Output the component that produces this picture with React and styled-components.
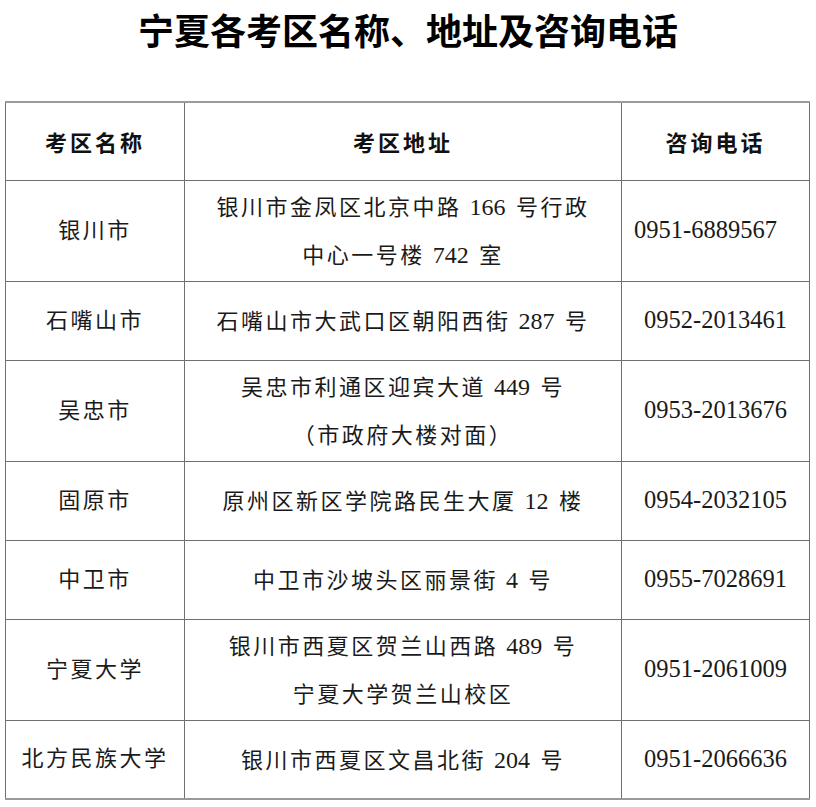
import React from 'react'
import styled, { createGlobalStyle } from 'styled-components'

const GlobalStyle = createGlobalStyle`
  html, body {
    margin: 0;
    padding: 0;
    background: #fff;
  }
  body {
    font-family: "Liberation Serif", "Noto Sans CJK SC", serif;
    color: #111;
  }
`

const Page = styled.div`
  width: 816px;
  min-height: 807px;
  box-sizing: border-box;
`

const Title = styled.h1`
  margin: 0;
  height: 101px;
  padding-top: 4px;
  box-sizing: border-box;
  line-height: 58px;
  text-align: center;
  font-size: 36px;
  font-weight: 700;
  color: #000;
`

const Table = styled.table`
  margin-left: 5px;
  width: 805px;
  border-collapse: collapse;
  table-layout: fixed;
  border-top: 2px solid #9a9a9a;
  border-bottom: 2px solid #9a9a9a;
`

const Row = styled.tr`
  height: ${props => props.$height}px;
`

const HeadCell = styled.th`
  border: 1px solid #707070;
  font-size: 22px;
  font-weight: 700;
  letter-spacing: 3px;
  text-align: center;
  vertical-align: middle;
  padding: 0;
  color: #111;
`

const Cell = styled.td`
  border: 1px solid #707070;
  font-size: 22px;
  letter-spacing: ${props => (props.$phone ? 0 : 2.5)}px;
  line-height: ${props => (props.$address ? 48.5 : 50)}px;
  text-align: center;
  vertical-align: middle;
  padding: ${props => (props.$address ? '3px 0 0' : '0')};
  color: #1a1a1a;
`

const Num = styled.span`
  font-size: 24px;
  line-height: 1;
  letter-spacing: 0;
  margin-right: 2.5px;
`

const Phone = styled.span`
  font-size: 24.5px;
  position: relative;
  left: ${props => props.$shift || 0}px;
`

const rows = [
  { name: '银川市', addr: ['银川市金凤区北京中路 166 号行政', '中心一号楼 742 室'], phone: '0951-6889567', shift: -10 },
  { name: '石嘴山市', addr: ['石嘴山市大武口区朝阳西街 287 号'], phone: '0952-2013461' },
  { name: '吴忠市', addr: ['吴忠市利通区迎宾大道 449 号', '（市政府大楼对面）'], phone: '0953-2013676' },
  { name: '固原市', addr: ['原州区新区学院路民生大厦 12 楼'], phone: '0954-2032105' },
  { name: '中卫市', addr: ['中卫市沙坡头区丽景街 4 号'], phone: '0955-7028691' },
  { name: '宁夏大学', addr: ['银川市西夏区贺兰山西路 489 号', '宁夏大学贺兰山校区'], phone: '0951-2061009' },
  { name: '北方民族大学', addr: ['银川市西夏区文昌北街 204 号'], phone: '0951-2066636' },
]

// numbers inside an address are set tighter and a bit larger, as in the print
const AddressLine = ({ text }) => (
  <div>
    {text.split(/(\d+)/).map((part, i) =>
      /^\d+$/.test(part) ? <Num key={i}>{part}</Num> : part
    )}
  </div>
)

export default function App() {
  return (
    <Page>
      <GlobalStyle />
      <Title>宁夏各考区名称、地址及咨询电话</Title>
      <Table>
        <colgroup>
          <col style={{ width: 179 }} />
          <col style={{ width: 437 }} />
          <col style={{ width: 188 }} />
        </colgroup>
        <thead>
          <Row $height={78}>
            <HeadCell>考区名称</HeadCell>
            <HeadCell>考区地址</HeadCell>
            <HeadCell>咨询电话</HeadCell>
          </Row>
        </thead>
        <tbody>
          {rows.map(r => (
            <Row key={r.name} $height={r.addr.length > 1 ? 101 : 79}>
              <Cell>{r.name}</Cell>
              <Cell $address>
                {r.addr.map((line, i) => (
                  <AddressLine key={i} text={line} />
                ))}
              </Cell>
              <Cell $phone>
                <Phone $shift={r.shift}>{r.phone}</Phone>
              </Cell>
            </Row>
          ))}
        </tbody>
      </Table>
    </Page>
  )
}
